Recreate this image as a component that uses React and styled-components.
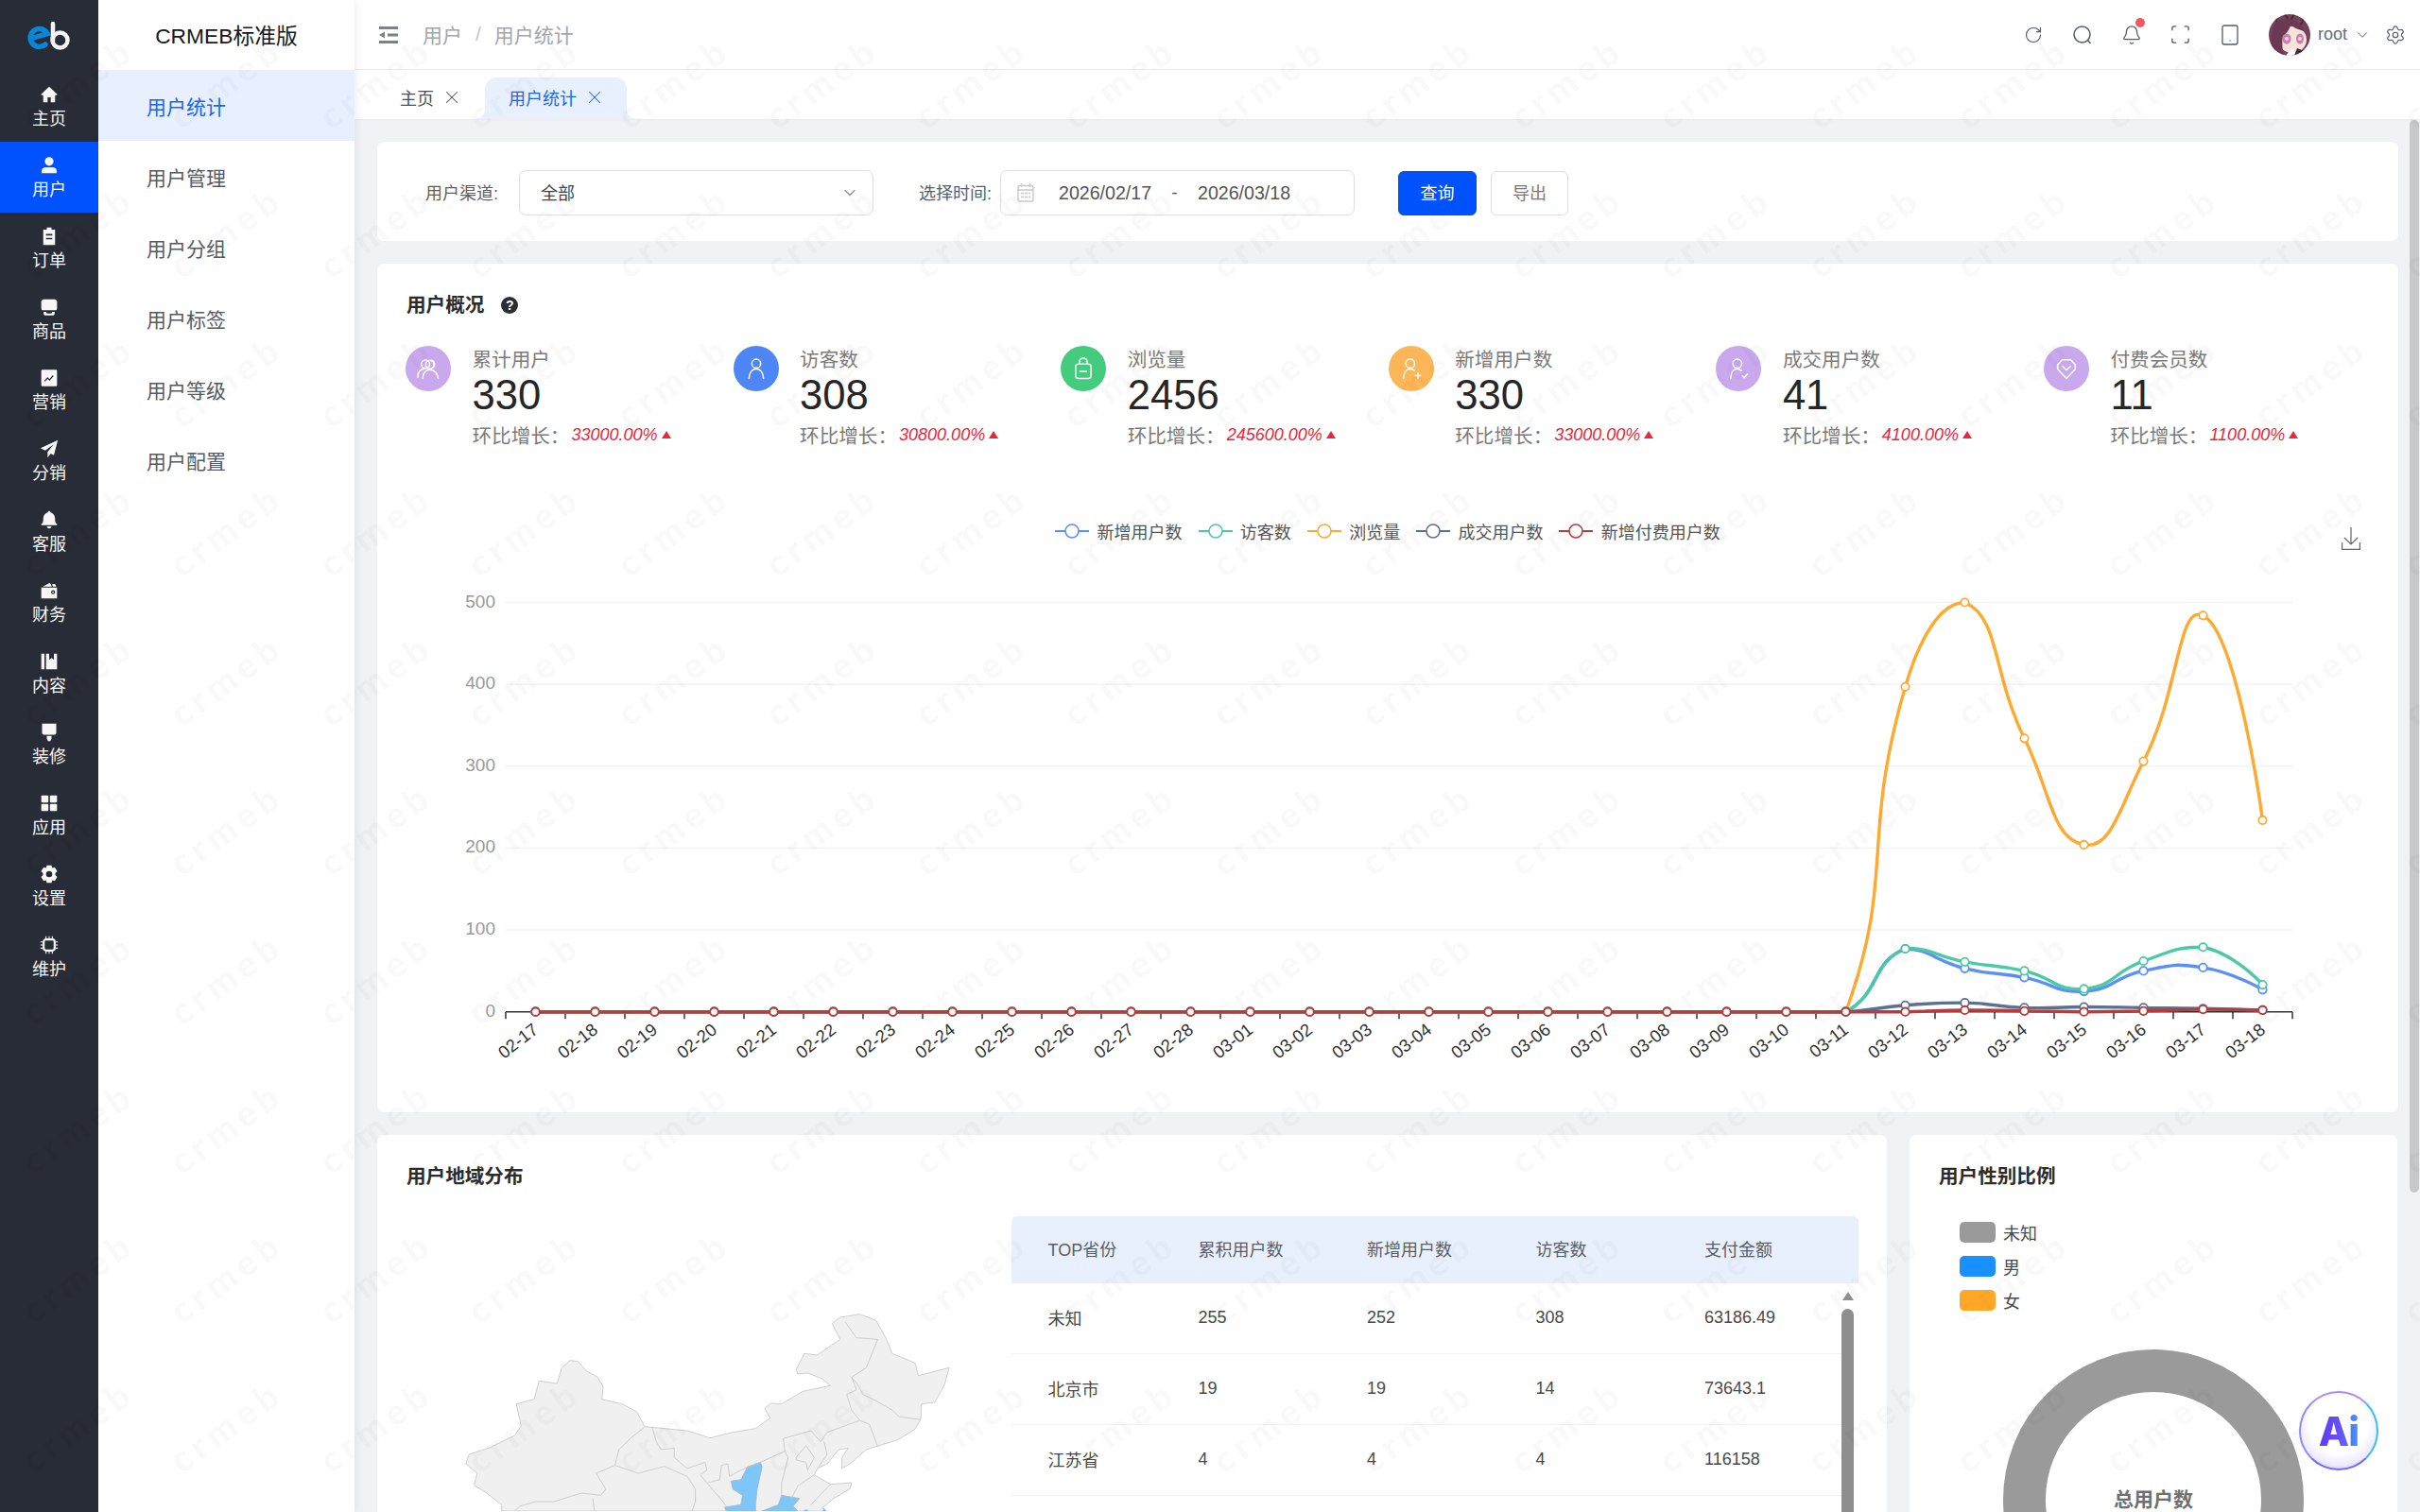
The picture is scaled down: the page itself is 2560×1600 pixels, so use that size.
import React from "react";
import styled, { createGlobalStyle } from "styled-components";
import { RotateCw, Bell, Scan, Tablet, Settings, ChevronDown, X } from "lucide-react";

const GlobalStyle = createGlobalStyle`
  html, body { margin: 0; padding: 0; height: 100%; overflow: hidden; background: #f0f2f5; }
  * { box-sizing: border-box; }
  body { font-family: "Liberation Sans", "Noto Sans CJK SC", sans-serif; color: #333; }
`;

const Shell = styled.div`
  display: flex;
  width: 2560px;
  height: 1600px;
  overflow: hidden;
  position: relative;
`;

const Rail = styled.nav`
  width: 104px;
  flex: none;
  background: #282c36;
`;

const LogoBox = styled.div`
  height: 75px;
  display: flex;
  align-items: center;
  justify-content: center;
`;

const RailItem = styled.div`
  height: 75px;
  padding-top: 15px;
  display: flex;
  flex-direction: column;
  align-items: center;
  color: #f7f7f7;
  background: ${(p) => (p.$active ? "#0052ff" : "transparent")};
  svg { width: 20px; height: 20px; display: block; }
`;

const RailLabel = styled.span`
  margin-top: 4px;
  font-size: 18px;
  line-height: 24px;
`;

const SubNav = styled.aside`
  width: 271px;
  flex: none;
  background: #fff;
  box-shadow: 3px 0 8px rgba(0, 21, 41, 0.06);
  position: relative;
  z-index: 2;
`;

const SubTitle = styled.div`
  height: 74px;
  padding-bottom: 2px;
  display: flex;
  align-items: center;
  justify-content: center;
  font-size: 22.8px;
  color: #17181a;
`;

const SubItem = styled.div`
  height: 75px;
  padding-left: 51px;
  display: flex;
  align-items: center;
  font-size: 21px;
  color: ${(p) => (p.$active ? "#1a66ea" : "#555b66")};
  background: ${(p) => (p.$active ? "#e8f0ff" : "transparent")};
`;

const Main = styled.main`
  flex: 1;
  min-width: 0;
  display: flex;
  flex-direction: column;
  position: relative;
`;

const TopBar = styled.header`
  height: 74px;
  flex: none;
  background: #fff;
  border-bottom: 1px solid #e8eaec;
  display: flex;
  align-items: center;
  padding-left: 26px;
`;

const Crumbs = styled.div`
  margin-left: 26px;
  padding-bottom: 2px;
  display: flex;
  align-items: center;
  font-size: 21px;
  color: #a3a6ad;
`;

const CrumbSep = styled.span`
  margin: 0 14px;
  color: #c2c5cb;
`;

const TopTools = styled.div`
  margin-left: auto;
  display: flex;
  align-items: center;
  color: #515a6e;
`;

const ToolIcon = styled.span`
  width: 52px;
  display: flex;
  justify-content: center;
  position: relative;
  margin-right: ${(p) => p.$gap || 0}px;
`;

const RedDot = styled.i`
  position: absolute;
  top: -7px;
  left: 30px;
  width: 10px;
  height: 10px;
  border-radius: 50%;
  background: #ef5b5b;
`;

const UserName = styled.span`
  margin-left: 8px;
  font-size: 18px;
  color: #666c78;
`;

const TabBar = styled.div`
  height: 52px;
  flex: none;
  background: #fff;
  display: flex;
  align-items: flex-end;
  box-shadow: 0 1px 3px rgba(0, 0, 0, 0.03);
  position: relative;
  z-index: 1;
`;

const Tab = styled.div`
  height: 44px;
  padding-bottom: 2px;
  display: flex;
  align-items: center;
  font-size: 18px;
  gap: 7.500px;
  color: ${(p) => (p.$active ? "#1a66ea" : "#4a4d55")};
  background: ${(p) => (p.$active ? "#e8f0fe" : "transparent")};
  border-radius: 12px 12px 0 0;
  padding-left: ${(p) => (p.$active ? "25px" : "48px")};
  padding-right: ${(p) => (p.$active ? "23.500px" : "24.500px")};
  position: relative;
  ${(p) =>
    p.$active &&
    `
    &::before, &::after {
      content: "";
      position: absolute;
      bottom: 0;
      width: 10px;
      height: 10px;
      background: radial-gradient(circle at ${"var(--c)"} 0, #fff 9.5px, #e8f0fe 10px);
    }
    &::before { left: -10px; --c: 0; }
    &::after { right: -10px; --c: 100%; }
  `}
`;

const Content = styled.div`
  flex: 1;
  min-height: 0;
  overflow: hidden;
  padding: 24px 23px 0 24px;
  display: flex;
  flex-direction: column;
  gap: 24px;
`;

const Card = styled.section`
  background: #fff;
  border-radius: 7px;
`;

const FilterCard = styled(Card)`
  height: 105px;
  flex: none;
  display: flex;
  align-items: flex-start;
  padding: 30px 0 0 51px;
`;

const FilterLabel = styled.span`
  height: 48px;
  padding-bottom: 3px;
  display: flex;
  align-items: center;
  font-size: 18px;
  color: #5a5e66;
  margin-right: ${(p) => p.$gap}px;
`;

const FieldBox = styled.div`
  width: 375px;
  height: 48px;
  border: 1px solid #dcdee2;
  border-radius: 7px;
  display: flex;
  align-items: center;
  padding-left: ${(p) => p.$left}px;
  padding-right: 14px;
  margin-right: ${(p) => p.$gap}px;
  font-size: 18px;
  color: #444;
`;

const FieldText = styled.span`
  position: relative;
  top: -1.500px;
`;

const DateText = styled.span`
  font-size: 19.6px;
  color: #555;
  width: 98px;
  white-space: nowrap;
`;

const DateDash = styled.span`
  width: 49px;
  text-align: center;
  font-size: 19px;
  color: #555;
`;

const Btn = styled.button`
  width: ${(p) => p.$w}px;
  height: 47px;
  margin-top: 1px;
  margin-right: 15px;
  padding: 0 0 3px;
  border-radius: 6px;
  font-family: inherit;
  font-size: 18px;
  border: 1px solid ${(p) => (p.$primary ? "#0052ff" : "#dcdee2")};
  background: ${(p) => (p.$primary ? "#0052ff" : "#fff")};
  color: ${(p) => (p.$primary ? "#fff" : "#777")};
`;

const OverviewCard = styled(Card)`
  height: 898px;
  flex: none;
  position: relative;
`;

const CardTitle = styled.h3`
  margin: 0;
  padding: 31px 0 0 31px;
  font-size: 20.6px;
  line-height: 26px;
  font-weight: 700;
  color: #2b2b2b;
  display: flex;
  align-items: center;
`;

const HelpMark = styled.span`
  margin-left: 18px;
  width: 18px;
  height: 18px;
  border-radius: 50%;
  background: #2a2d35;
  color: #fff;
  font-size: 14px;
  font-weight: 700;
  line-height: 18px;
  text-align: center;
`;

const StatRow = styled.div`
  display: grid;
  grid-template-columns: repeat(6, 346.6px);
  padding: 30px 0 0 30px;
`;

const Stat = styled.div`
  display: flex;
`;

const StatBadge = styled.div`
  width: 48px;
  height: 48px;
  border-radius: 50%;
  flex: none;
  background: ${(p) => p.$color};
  display: flex;
  align-items: center;
  justify-content: center;
  margin-right: 22.5px;
`;

const StatName = styled.div`
  font-size: 20.6px;
  line-height: 30px;
  color: #7b7b7b;
`;

const StatValue = styled.div`
  font-size: 43.6px;
  line-height: 44px;
  color: #262626;
`;

const StatDelta = styled.div`
  height: 40px;
  display: flex;
  align-items: center;
  font-size: 20.6px;
  color: #7b7b7b;
  white-space: nowrap;
`;

const DeltaValue = styled.em`
  font-size: 18px;
  color: #e8283c;
  margin-left: 2px;
`;

const DeltaArrow = styled.i`
  margin-left: 4px;
  border-left: 5px solid transparent;
  border-right: 5px solid transparent;
  border-bottom: 8px solid #e8283c;
`;

const ChartBox = styled.div`
  position: relative;
  padding-top: 72px;
`;

const Legend = styled.div`
  height: 20px;
  display: flex;
  justify-content: center;
  gap: 17px;
`;

const LegendItem = styled.div`
  display: flex;
  align-items: center;
  gap: 8.300px;
  font-size: 18px;
  color: #555;
  white-space: nowrap;
`;

const SaveIcon = styled.svg`
  position: absolute;
  right: 40px;
  top: 78px;
`;

const ChartSvg = styled.svg`
  display: block;
`;

const BottomRow = styled.div`
  display: flex;
  gap: 24px;
  flex: none;
`;

const RegionCard = styled(Card)`
  width: 1597px;
  height: 520px;
  flex: none;
`;

const RegionBody = styled.div`
  display: flex;
  padding: 29px 0 0 30px;
`;

const MapCol = styled.div`
  width: 640.500px;
  flex: none;
  padding: 92px 0 0 50px;
`;

const TableWrap = styled.div`
  width: 896px;
  flex: none;
  position: relative;
`;

const HeadRow = styled.div`
  display: grid;
  grid-template-columns: 159px repeat(4, 178.5px);
  align-items: center;
  height: 71px;
  padding: 0 0 3px 39px;
  background: #e8f0fe;
  border-radius: 6px 6px 0 0;
  font-size: 18px;
  color: #5a5e66;
`;

const BodyRow = styled.div`
  display: grid;
  grid-template-columns: 159px repeat(4, 178.5px);
  align-items: center;
  width: 878px;
  height: 75px;
  padding: 0 0 2px 39px;
  border-bottom: 1px solid #f0f1f3;
  font-size: 18px;
  color: #4a4a4a;
`;

const ScrollArrow = styled.i`
  position: absolute;
  right: 5px;
  top: 80px;
  border-left: 6.5px solid transparent;
  border-right: 6.5px solid transparent;
  border-bottom: 9px solid #909090;
`;

const ScrollBar = styled.div`
  position: absolute;
  right: 5px;
  top: 98px;
  width: 13px;
  height: 300px;
  background: #8e8e8e;
  border-radius: 7px 7px 0 0;
`;

const GenderCard = styled(Card)`
  width: 516px;
  height: 520px;
  flex: none;
`;

const GenderLegend = styled.div`
  display: flex;
  flex-direction: column;
  gap: 14px;
  padding: 35px 0 0 53px;
`;

const GenderRow = styled.div`
  display: flex;
  align-items: center;
  height: 22px;
  font-size: 18px;
  color: #4a4a4a;
  gap: 8px;
`;

const Swatch = styled.i`
  width: 38px;
  height: 22px;
  border-radius: 5px;
  background: ${(p) => p.$color};
`;

const DonutBox = styled.div`
  display: flex;
  justify-content: center;
  padding-top: 41px;
`;

const PageThumb = styled.div`
  position: absolute;
  right: 1px;
  top: 127px;
  width: 10px;
  height: 1135px;
  background: #c6c8cc;
  border-radius: 5px;
  z-index: 3;
`;

const AiBubble = styled.div`
  position: absolute;
  left: 2432px;
  top: 1472px;
  width: 84px;
  height: 84px;
  border-radius: 50%;
  background: radial-gradient(circle at 50% 42%, #fff 50%, #efe9ff 70%, #b7a4ff 92%);
  border: 2px solid #8f8cf5;
  border-top-color: #a98df2;
  border-right-color: #39c0ee;
  border-bottom-color: #6f6cff;
  display: flex;
  align-items: center;
  justify-content: center;
  z-index: 6;
`;

const AiText = styled.span`
  font-family: Inter, "Liberation Sans", sans-serif;
  font-size: 42px;
  font-weight: 800;
  letter-spacing: -1px;
  background: linear-gradient(90deg, #5a3cf5 0%, #6b50f8 55%, #3d9bf5 100%);
  -webkit-background-clip: text;
  background-clip: text;
  color: transparent;
`;

const Watermarks = styled.div`
  position: absolute;
  inset: 0;
  overflow: hidden;
  pointer-events: none;
  z-index: 5;
  display: grid;
  grid-template-columns: repeat(17, 157.5px);
  grid-auto-rows: 158px;
  padding: 7px 0 0 2.75px;
  filter: blur(0.7px);
`;

const Mark = styled.span`
  display: flex;
  align-items: center;
  justify-content: center;
  font-family: Lato, "Liberation Sans", sans-serif;
  font-weight: 900;
  font-size: 38px;
  letter-spacing: 6px;
  color: rgba(0, 0, 0, 0.022);
  transform: rotate(-36deg);
  white-space: nowrap;
`;

/* rail icons */
const railIcons = {
  home: <path fill="currentColor" d="M12 2 2 11.5V13h2.500v9h5.500v-6.500h4V22h5.500v-9H22v-1.500z" />,
  user: (
    <g fill="currentColor">
      <circle cx="12" cy="7" r="5.500" />
      <path d="M2.500 22v-3.500C2.500 16 5 14.500 7.500 14.500h9c2.500 0 5 1.500 5 4V22z" />
    </g>
  ),
  order: (
    <g>
      <path fill="currentColor" d="M9 1h6v2.500h4.500V23h-15V3.500H9z" />
      <path stroke="#282c36" strokeWidth="2" d="M8 10h8M8 15h8" />
    </g>
  ),
  goods: (
    <g fill="currentColor">
      <path d="M5 2h14c1.500 0 3 1.200 3 3v9c0 1-1 2-2 2H4c-1 0-2-1-2-2V5c0-1.800 1.500-3 3-3z" />
      <path d="M5 18h3l1 2h6l1-2h3v2c0 1.500-1 2.500-2.500 2.500h-9C6 22.500 5 21.500 5 20z" />
    </g>
  ),
  chart: (
    <g>
      <rect x="2" y="1.500" width="20" height="21" rx="1.500" fill="currentColor" />
      <path d="M6 16l4-4 2.500 2.500L17 9" fill="none" stroke="#282c36" strokeWidth="1.500" />
    </g>
  ),
  send: <path fill="currentColor" d="M23 1 1 11l6 3 11-8-8 10v7l4-5 4 2z" />,
  bell: (
    <g fill="currentColor">
      <path d="M12 1c1 0 1.800.8 1.800 1.800C17.500 4 19.500 7 19.500 11c0 3 .5 5 2.500 6.500v1.500H2v-1.500C4 16 4.500 14 4.500 11c0-4 2-7 5.700-8.200C10.200 1.800 11 1 12 1z" />
      <path d="M9 20.500h6c0 1.500-1.300 2.500-3 2.500s-3-1-3-2.500z" />
    </g>
  ),
  wallet: (
    <g>
      <path fill="currentColor" d="M2 8h20v14H2zM4 7l9-5 2.500 5zM17 7l-1.500-3 4-.5L21 7z" />
      <circle cx="17" cy="14" r="2.500" fill="#282c36" />
      <circle cx="17" cy="14" r="1" fill="currentColor" />
    </g>
  ),
  book: (
    <path
      fill="currentColor"
      d="M2 2h4v20H2zM8 2h4v8l3-2.500 3 2.500V2h4v20H8z"
    />
  ),
  brush: (
    <g fill="currentColor">
      <path d="M3 1h18v12c0 1-1 2-2 2H5c-1 0-2-1-2-2z" />
      <path d="M9 16.500h6V20l-1.500 3h-3L9 20z" />
    </g>
  ),
  apps: (
    <g fill="currentColor">
      <rect x="2" y="2" width="9" height="9" rx="1" />
      <rect x="13" y="2" width="9" height="9" rx="1" />
      <rect x="2" y="13" width="9" height="9" rx="1" />
      <rect x="13" y="13" width="9" height="9" rx="1" />
    </g>
  ),
  gear: (
    <path
      fill="currentColor"
      fillRule="evenodd"
      d="M9 1h6l1 3.200 3.200-1 3 5.300-2.400 2.300v2.400l2.400 2.300-3 5.300-3.200-1L15 23H9l-1-3.200-3.200 1-3-5.300 2.400-2.300v-2.400L1.800 8.500l3-5.300 3.200 1zM12 8a4 4 0 1 0 0 8 4 4 0 0 0 0-8z"
    />
  ),
  chip: (
    <g fill="none" stroke="currentColor">
      <rect x="5" y="5" width="14" height="14" rx="3" strokeWidth="2.600" />
      <path strokeWidth="1.300" d="M8 1v3M12 1v3M16 1v3M8 20v3M12 20v3M16 20v3M1 8h3M1 12h3M1 16h3M20 8h3M20 12h3M20 16h3" />
    </g>
  ),
};

const railItems = [
  ["home", "主页"],
  ["user", "用户", true],
  ["order", "订单"],
  ["goods", "商品"],
  ["chart", "营销"],
  ["send", "分销"],
  ["bell", "客服"],
  ["wallet", "财务"],
  ["book", "内容"],
  ["brush", "装修"],
  ["apps", "应用"],
  ["gear", "设置"],
  ["chip", "维护"],
];

const subItems = ["用户统计", "用户管理", "用户分组", "用户标签", "用户等级", "用户配置"];

const Line = (props) => (
  <svg width="28" height="28" viewBox="0 0 24 24" fill="none" stroke="#fff" strokeWidth="1.300" strokeLinecap="round" strokeLinejoin="round" {...props} />
);

const stats = [
  {
    name: "累计用户", value: "330", delta: "33000.00%", color: "#c9a8ee",
    icon: (
      <Line>
        <circle cx="9.500" cy="8" r="3.800" />
        <path d="M2.500 20c0-5 2.500-7.500 6-8M15 4.500a3.800 3.800 0 0 1 0 7.300" />
        <circle cx="13.500" cy="8.500" r="3.800" />
        <path d="M7 21c0-5 2.800-8 6.500-8s7 3 7.500 8" />
      </Line>
    ),
  },
  {
    name: "访客数", value: "308", delta: "30800.00%", color: "#4e87f5",
    icon: (
      <Line>
        <circle cx="12" cy="7.500" r="4" />
        <path d="M5.500 21c0-5 2.500-8.500 6.500-8.500s6.500 3.500 6.500 8.500" />
      </Line>
    ),
  },
  {
    name: "浏览量", value: "2456", delta: "245600.00%", color: "#43cb7e",
    icon: (
      <Line>
        <rect x="5" y="8" width="14" height="13" rx="2.500" />
        <path d="M8.500 8V6a3.500 3.500 0 0 1 7 0v2M9 14.500h6" />
      </Line>
    ),
  },
  {
    name: "新增用户数", value: "330", delta: "33000.00%", color: "#fbb657",
    icon: (
      <Line>
        <circle cx="11" cy="7.500" r="4" />
        <path d="M5 21c0-5 2.200-8.500 6-8.500 1.500 0 2.800.5 3.800 1.500M18 16v5M15.500 18.500h5" />
      </Line>
    ),
  },
  {
    name: "成交用户数", value: "41", delta: "4100.00%", color: "#c9a8ee",
    icon: (
      <Line>
        <circle cx="11" cy="7.500" r="4" />
        <path d="M5 21c0-5 2.200-8.500 6-8.500 1.500 0 2.800.5 3.800 1.500M15.500 18.500l1.800 1.800 3-3.300" />
      </Line>
    ),
  },
  {
    name: "付费会员数", value: "11", delta: "1100.00%", color: "#c9a8ee",
    icon: (
      <Line>
        <path d="M8 4h8l4 4.500v4L12 21l-8-8.500v-4z" />
        <path d="M8.500 10l3.500 3.500 3.500-3.500" />
      </Line>
    ),
  },
];

/* chart data */
const days = [
  ...Array.from({ length: 12 }, (_, i) => `02-${i + 17}`),
  ...Array.from({ length: 18 }, (_, i) => `03-${String(i + 1).padStart(2, "0")}`),
];
const head = Array(23).fill(0);
const series = [
  { name: "新增用户数", color: "#5b8ff9", data: [...head, 77, 53, 42, 25, 50, 54, 27] },
  { name: "访客数", color: "#4bcaa5", data: [...head, 77, 61, 50, 28, 62, 79, 33] },
  { name: "浏览量", color: "#ffa92e", data: [...head, 397, 500, 334, 204, 306, 484, 234] },
  { name: "成交用户数", color: "#5d7092", data: [...head, 8, 11, 5, 6, 5, 4, 2] },
  { name: "新增付费用户数", color: "#b53d3d", data: [...head, 0, 2, 1, 0, 1, 3, 2] },
];

const axisY = 1070.7;
const unit = 0.8664;
const xAt = (i) => 566.5 + i * 63;
const yAt = (v) => axisY - v * unit;

// echarts style smoothing with the control points kept inside the data range
const smoothPath = (data) => {
  const pts = data.map((v, i) => [xAt(i), yAt(v)]);
  const top = yAt(Math.max(...data));
  const cps = pts.map((p, i) => {
    const a = pts[i - 1];
    const b = pts[i + 1];
    if (!a || !b) return { prev: p, next: p };
    const lenA = Math.hypot(p[0] - a[0], p[1] - a[1]);
    const lenB = Math.hypot(b[0] - p[0], b[1] - p[1]);
    const r = lenB / (lenA + lenB);
    const clamp = (y) => Math.min(axisY, Math.max(top, y));
    const dx = (b[0] - a[0]) * 0.5;
    const dy = (b[1] - a[1]) * 0.5;
    return {
      next: [p[0] + dx * r, clamp(p[1] + dy * r)],
      prev: [p[0] - dx * (1 - r), clamp(p[1] - dy * (1 - r))],
    };
  });
  let d = `M${pts[0][0]} ${pts[0][1]}`;
  for (let i = 1; i < pts.length; i++) {
    const c1 = cps[i - 1].next;
    const c2 = cps[i].prev;
    d += `C${c1[0]} ${c1[1]} ${c2[0]} ${c2[1]} ${pts[i][0]} ${pts[i][1]}`;
  }
  return d;
};

const provinces = [
  ["未知", 255, 252, 308, "63186.49"],
  ["北京市", 19, 19, 14, "73643.1"],
  ["江苏省", 4, 4, 4, "116158"],
];

const Logo = () => (
  <svg width="46" height="32" viewBox="0 0 46 32" fill="none">
    <path d="M5 18.500 L21 13.500 A9.500 9.500 0 1 0 19 25" stroke="#0a86d8" strokeWidth="5.500" strokeLinecap="round" />
    <path d="M27 3v19" stroke="#f4f4f4" strokeWidth="4.500" strokeLinecap="round" />
    <circle cx="34.500" cy="20.500" r="8" stroke="#f4f4f4" strokeWidth="4.500" />
  </svg>
);

const Avatar = () => (
  <svg width="44" height="44" viewBox="0 0 44 44">
    <clipPath id="avatarClip">
      <circle cx="22" cy="22" r="22" />
    </clipPath>
    <g clipPath="url(#avatarClip)">
      <rect width="44" height="44" fill="#74425a" />
      <circle cx="14" cy="6" r="6" fill="none" stroke="#4b2a3c" strokeWidth="2" />
      <circle cx="30" cy="6" r="6" fill="none" stroke="#4b2a3c" strokeWidth="2" />
      <ellipse cx="25" cy="27" rx="15" ry="14" fill="#f8e3dc" />
      <path d="M8 8c10-6 24-4 30 10-8-2-12-4-15-7-1 6-5 10-8 12-1 6-1 12 1 21H4C2 30 2 16 8 8z" fill="#6b3a52" />
      <ellipse cx="19" cy="26" rx="4.500" ry="5.500" fill="#c781a8" />
      <ellipse cx="33" cy="26" rx="4" ry="5.500" fill="#c781a8" />
      <circle cx="19" cy="26" r="2" fill="#f3cfe0" />
      <circle cx="33" cy="26" r="2" fill="#f3cfe0" />
      <path d="M24 36l10 8H18z" fill="#fff" />
      <path d="M30 36l10 4v6H26z" fill="#4b2a3c" />
    </g>
  </svg>
);

const ChinaMap = () => (
  <svg width="540" height="220" viewBox="0 0 1568 660" preserveAspectRatio="none">
    <path
      fill="#f0f0f0"
      stroke="#c4c4c4"
      strokeWidth="0.8"
      vectorEffect="non-scaling-stroke"
      d="M150 660 L150 640 100 600 65 578 75 540 40 510 50 480 110 460 190 420 210 390 195 320 250 305 265 247 320 255 335 205 360 182 385 185 410 215 445 235 462 265 458 305 520 320 565 345 590 392 650 398 720 405 790 428 860 410 930 398 975 365 958 335 975 318 1010 320 1075 280 1160 262 1135 240 1090 222 1060 225 1055 210 1080 160 1120 165 1190 115 1165 65 1190 45 1250 35 1300 55 1330 110 1350 160 1420 190 1430 230 1525 205 1510 260 1480 315 1440 320 1437 370 1420 400 1365 435 1300 455 1270 465 1220 510 1195 525 1195 490 1215 460 1185 465 1150 510 1120 525 1110 545 1160 575 1225 570 1220 590 1170 620 1135 650 1145 660 Z"
    />
    <path fill="#7ec5f8" stroke="#a0b6c6" strokeWidth="0.8" vectorEffect="non-scaling-stroke" d="M945 505 950 520 935 590 930 640 930 660 840 660 835 648 885 640 890 610 860 590 855 565 885 560 905 520Z" />
    <path fill="#7ec5f8" stroke="#a0b6c6" strokeWidth="0.8" vectorEffect="non-scaling-stroke" d="M950 660 1000 640 1010 610 1065 620 1045 645 1060 660Z" />
    <path fill="#7ec5f8" d="M1075 660 1085 654 1095 660ZM1135 660 1140 650 1148 660Z" />
    <g fill="none" stroke="#c4c4c4" strokeWidth="0.8">
      <path vectorEffect="non-scaling-stroke" d="M590 392 545 430 510 465 498 515 570 540 650 518 720 550 745 590 745 630 735 660" />
      <path vectorEffect="non-scaling-stroke" d="M498 515 440 540 470 590 455 610 395 603 310 630 255 630 205 645 190 660M430 620 435 660" />
      <path vectorEffect="non-scaling-stroke" d="M612 392 625 440 640 465 680 460 680 490 720 525 775 505 780 530 760 545 780 570 830 630 840 645" />
      <path vectorEffect="non-scaling-stroke" d="M785 570 820 560 825 515 845 510 850 550 885 530 945 505 1020 470 1015 430 1100 405 1130 440 1150 410 1250 372" />
      <path vectorEffect="non-scaling-stroke" d="M1020 470 1030 490 1010 570 1010 610M1140 440 1150 480 1120 525M1055 490 1085 452 1110 490 1090 530 1085 505 1055 498Z" />
      <path vectorEffect="non-scaling-stroke" d="M1225 235 1270 205 1305 115 1240 110 1205 60M1225 235 1245 260 1260 290 1300 310 1350 340 1370 360 1437 370M1225 235 1240 275 1210 290 1225 340 1250 372 1280 385 1305 455" />
      <path vectorEffect="non-scaling-stroke" d="M1110 545 1060 580 1040 620M1160 575 1100 640" />
    </g>
  </svg>
);

const App = () => (
  <Shell>
    <GlobalStyle />
    <Rail>
      <LogoBox>
        <Logo />
      </LogoBox>
      {railItems.map(([icon, label, active]) => (
        <RailItem key={label} $active={active}>
          <svg viewBox="0 0 24 24">{railIcons[icon]}</svg>
          <RailLabel>{label}</RailLabel>
        </RailItem>
      ))}
    </Rail>

    <SubNav>
      <SubTitle>CRMEB标准版</SubTitle>
      {subItems.map((item, i) => (
        <SubItem key={item} $active={i === 0}>
          {item}
        </SubItem>
      ))}
    </SubNav>

    <Main>
      <TopBar>
        <svg width="20" height="18" viewBox="0 0 20 18" fill="#7c8089">
          <path d="M0 0h20v3H0zM9 7.500h11v3H9zM0 15h20v3H0zM6 5.500v7L0 9z" />
        </svg>
        <Crumbs>
          用户
          <CrumbSep>/</CrumbSep>
          用户统计
        </Crumbs>
        <TopTools>
          <ToolIcon>
            <RotateCw size={20} strokeWidth={1.400} />
          </ToolIcon>
          <ToolIcon>
            <svg width="22" height="22" viewBox="0 0 22 22" fill="none" stroke="currentColor" strokeWidth="1.500">
              <circle cx="10.500" cy="10.500" r="8.500" />
              <path d="M16.500 16.500l3 3.500" />
            </svg>
          </ToolIcon>
          <ToolIcon>
            <Bell size={22} strokeWidth={1.400} />
            <RedDot />
          </ToolIcon>
          <ToolIcon>
            <Scan size={23} strokeWidth={1.400} />
          </ToolIcon>
          <ToolIcon $gap={15}>
            <Tablet size={24} strokeWidth={1.300} />
          </ToolIcon>
          <Avatar />
          <UserName>root</UserName>
          <ChevronDown size={18} strokeWidth={1.300} style={{ marginLeft: 7 }} />
          <ToolIcon>
            <Settings size={22} strokeWidth={1.300} />
          </ToolIcon>
        </TopTools>
      </TopBar>

      <TabBar>
        <Tab>
          主页
          <X size={22} strokeWidth={1.100} />
        </Tab>
        <Tab $active>
          用户统计
          <X size={22} strokeWidth={1.100} />
        </Tab>
      </TabBar>

      <Content>
        <FilterCard>
          <FilterLabel $gap={22}>用户渠道:</FilterLabel>
          <FieldBox $left={22} $gap={48}>
            <FieldText>全部</FieldText>
            <ChevronDown size={20} strokeWidth={1.300} color="#808695" style={{ marginLeft: "auto" }} />
          </FieldBox>
          <FilterLabel $gap={9}>选择时间:</FilterLabel>
          <FieldBox $left={17} $gap={46}>
            <svg width="18" height="20" viewBox="0 0 18 20" fill="none" stroke="#c5c8ce" strokeWidth="1.400" style={{ marginRight: 26 }}>
              <rect x="1" y="2.500" width="16" height="16.500" rx="1.500" />
              <path d="M1 7h16M4.500 0v4M13.500 0v4M4 10.500h3M8 10.500h3M12 10.500h2M4 14.500h3M8 14.500h3M12 14.500h2" />
            </svg>
            <DateText>2026/02/17</DateText>
            <DateDash>-</DateDash>
            <DateText>2026/03/18</DateText>
          </FieldBox>
          <Btn $primary $w={83}>查询</Btn>
          <Btn $w={82}>导出</Btn>
        </FilterCard>

        <OverviewCard>
          <CardTitle>
            用户概况
            <HelpMark>?</HelpMark>
          </CardTitle>
          <StatRow>
            {stats.map((s) => (
              <Stat key={s.name}>
                <StatBadge $color={s.color}>{s.icon}</StatBadge>
                <div>
                  <StatName>{s.name}</StatName>
                  <StatValue>{s.value}</StatValue>
                  <StatDelta>
                    环比增长：
                    <DeltaValue>{s.delta}</DeltaValue>
                    <DeltaArrow />
                  </StatDelta>
                </div>
              </Stat>
            ))}
          </StatRow>
          <ChartBox>
            <Legend>
              {series.map((s) => (
                <LegendItem key={s.name}>
                  <svg width="36" height="18" viewBox="0 0 36 18">
                    <path d="M0 9h36" stroke={s.color} strokeWidth="2" />
                    <circle cx="18" cy="9" r="7" fill="#fff" stroke={s.color} strokeWidth="1.600" />
                  </svg>
                  {s.name}
                </LegendItem>
              ))}
            </Legend>
            <SaveIcon width="20" height="24" viewBox="0 0 20 24" fill="none" stroke="#666" strokeWidth="1.200">
              <path d="M10 0v18M3 11l7 7 7-7M.6 16v7.400h18.800V16" />
            </SaveIcon>
            <ChartSvg width="2138" height="605" viewBox="399 572 2138 605">
              {[100, 200, 300, 400, 500].map((v) => (
                <path key={v} d={`M535 ${yAt(v)}H2425`} stroke="#f3f3f3" strokeWidth="1.500" />
              ))}
              {[0, 100, 200, 300, 400, 500].map((v) => (
                <text key={v} x="524" y={yAt(v) - 1.5} textAnchor="end" dominantBaseline="central" fontSize="19" fill="#999">
                  {v}
                </text>
              ))}
              <path d={`M535 ${axisY}H2425`} stroke="#333" strokeWidth="1.500" />
              {Array.from({ length: 31 }, (_, i) => (
                <path key={i} d={`M${535 + i * 63} ${axisY}v7.500`} stroke="#333" strokeWidth="1.500" />
              ))}
              {days.map((d, i) => (
                <text
                  key={d}
                  x={xAt(i)}
                  y={axisY + 16}
                  textAnchor="end"
                  dominantBaseline="central"
                  fontSize="18.5"
                  fill="#333"
                  transform={`rotate(-38 ${xAt(i)} ${axisY + 16})`}
                >
                  {d}
                </text>
              ))}
              {series.map((s) => (
                <g key={s.name}>
                  <path d={smoothPath(s.data)} fill="none" stroke={s.color} strokeWidth="3.400" />
                  {s.data.map((v, i) => (
                    <circle key={i} cx={xAt(i)} cy={yAt(v)} r="4.200" fill="#fff" stroke={s.color} strokeWidth="1.800" />
                  ))}
                </g>
              ))}
            </ChartSvg>
          </ChartBox>
        </OverviewCard>

        <BottomRow>
          <RegionCard>
            <CardTitle>用户地域分布</CardTitle>
            <RegionBody>
              <MapCol>
                <ChinaMap />
              </MapCol>
              <TableWrap>
                <HeadRow>
                  <span>TOP省份</span>
                  <span>累积用户数</span>
                  <span>新增用户数</span>
                  <span>访客数</span>
                  <span>支付金额</span>
                </HeadRow>
                {provinces.map((row) => (
                  <BodyRow key={row[0]}>
                    {row.map((cell, i) => (
                      <span key={i}>{cell}</span>
                    ))}
                  </BodyRow>
                ))}
                <ScrollArrow />
                <ScrollBar />
              </TableWrap>
            </RegionBody>
          </RegionCard>
          <GenderCard>
            <CardTitle>用户性别比例</CardTitle>
            <GenderLegend>
              <GenderRow><Swatch $color="#9a9a9a" />未知</GenderRow>
              <GenderRow><Swatch $color="#1890ff" />男</GenderRow>
              <GenderRow><Swatch $color="#ffa828" />女</GenderRow>
            </GenderLegend>
            <DonutBox>
              <svg width="318" height="318" viewBox="0 0 318 318">
                <circle cx="159" cy="159" r="136.500" fill="none" stroke="#9a9a9a" strokeWidth="45" />
                <text x="159" y="158" textAnchor="middle" dominantBaseline="central" fontSize="21" fontWeight="700" fill="#6f6f6f">
                  总用户数
                </text>
              </svg>
            </DonutBox>
          </GenderCard>
        </BottomRow>
      </Content>
      <PageThumb />
    </Main>

    <AiBubble>
      <AiText>Ai</AiText>
    </AiBubble>
    <Watermarks>
      {Array.from({ length: 170 }, (_, i) => (
        <Mark key={i}>crmeb</Mark>
      ))}
    </Watermarks>
  </Shell>
);

export default App;
